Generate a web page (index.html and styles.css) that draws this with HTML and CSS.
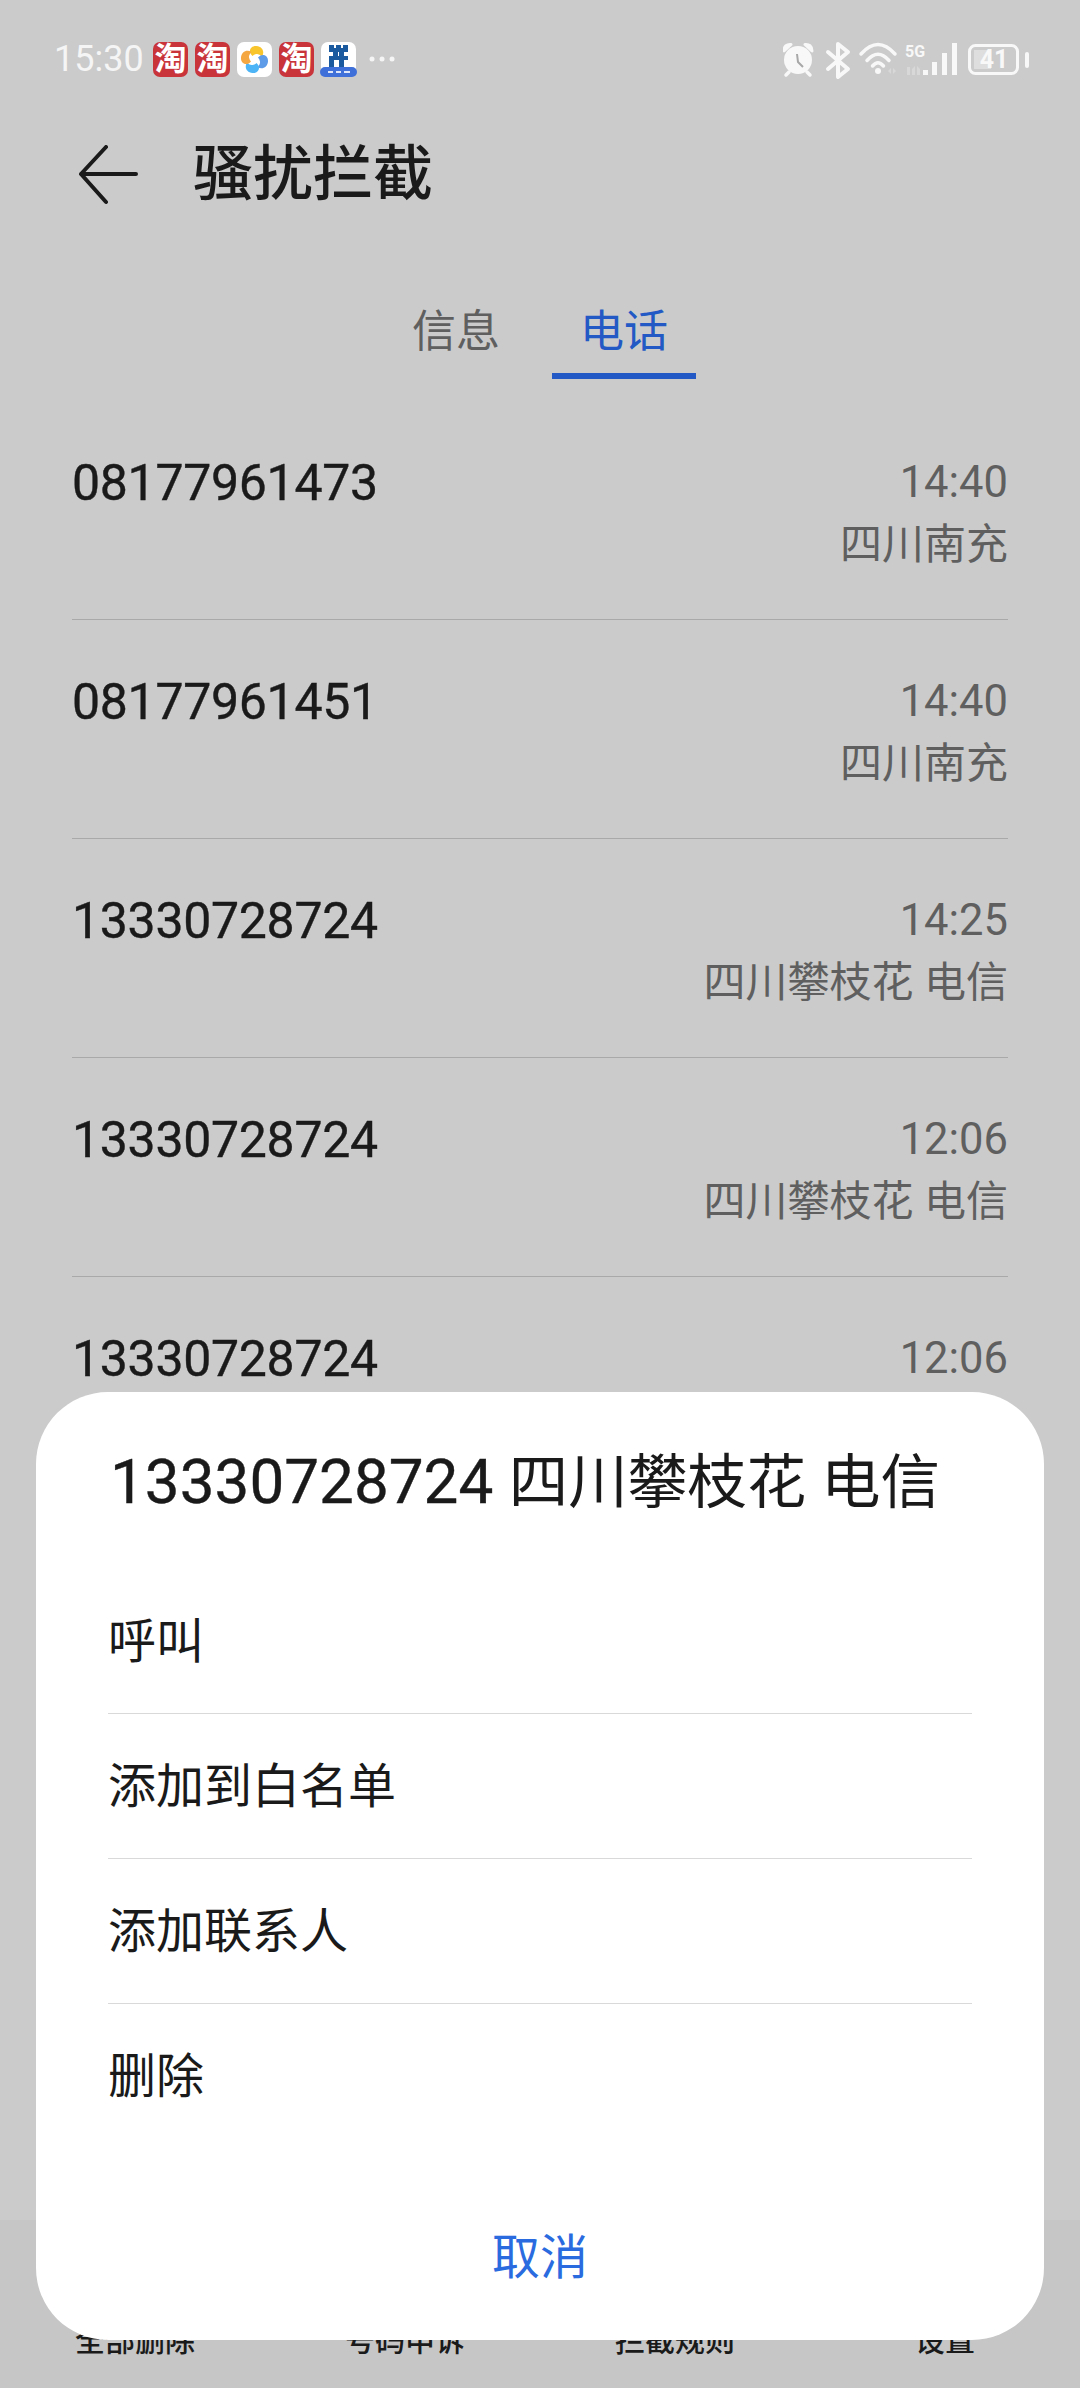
FILE: index.html
```html
<!DOCTYPE html>
<html lang="zh-CN">
<head>
    <meta charset="UTF-8">
    <meta name="viewport" content="width=device-width, initial-scale=1.0">
    <title>骚扰拦截</title>
    <link rel="stylesheet" href="styles.css">
</head>
<body>

<div class="page">
    <div class="status-bar">
        <span class="clock">15:30</span>
        <div class="notify-icons">
            <span class="tao-icon">淘</span>
            <span class="tao-icon">淘</span>
            <svg class="app-icon" viewBox="0 0 35 35">
                <rect width="35" height="35" rx="7" fill="#fff"/>
                <path d="M15.500 14C10.500 9.500 13.500 3.500 19.500 4C25.500 4.500 28 10 25 14.500Q22 11.500 19.500 12Q17 12.500 15.500 14Z" fill="#f9c52d"/>
                <path d="M21 15.500C25.500 10.500 31.500 13.500 31 19.500C30.500 25.500 25 28 20.500 25Q23.500 22 23 19.500Q22.500 17 21 15.500Z" fill="#5d9ae8"/>
                <path d="M19.500 21C24.500 25.500 21.500 31.500 15.500 31C9.500 30.500 7 25 10 20.500Q13 23.500 15.500 23Q18 22.500 19.500 21Z" fill="#4db5f5"/>
                <path d="M14 19.500C9.500 24.500 3.500 21.500 4 15.500C4.500 9.500 10 7 14.500 10Q11.500 13 12 15.500Q12.500 18 14 19.500Z" fill="#f5a742"/>
            </svg>
            <span class="tao-icon">淘</span>
            <svg class="app-icon" viewBox="0 0 35 35">
                <rect width="35" height="35" rx="7" fill="#fff"/>
                <path d="M8 3h5v3h2V3h5v3h2V3h5v7h-4v4h4v4h-4v7h-5v-7h-5v7h-5v-7H8v-4h4v-4H8zM17 10v4h1v-4z" fill="#1b5a9e" fill-rule="evenodd"/>
                <rect x="-1" y="25" width="37" height="10" rx="5" fill="#3f6fd8"/>
                <rect x="7" y="29" width="5" height="2" fill="#dfe8fb"/>
                <rect x="15" y="29" width="5" height="2" fill="#dfe8fb"/>
                <rect x="23" y="29" width="6" height="2" fill="#dfe8fb"/>
            </svg>
            <svg class="more-dots" viewBox="0 0 26 6">
                <circle cx="3" cy="3" r="2.500"/>
                <circle cx="13" cy="3" r="2.500"/>
                <circle cx="23" cy="3" r="2.500"/>
            </svg>
        </div>
        <div class="system-icons">
            <!-- alarm -->
            <svg class="sys-alarm" viewBox="0 0 40 50">
                <circle cx="15" cy="26" r="14" fill="#f8f8f8"/>
                <path d="M1 17C1 12 4 10 8 10.500ZM29 17C29 12 26 10 22 10.500Z" fill="#f8f8f8" stroke="#f8f8f8" stroke-width="3" stroke-linejoin="round"/>
                <path d="M6 38L3 41M24 38L27 41" stroke="#f8f8f8" stroke-width="3.500" stroke-linecap="round"/>
                <path d="M14 20L15 28L20 33" fill="none" stroke="#a8a8a8" stroke-width="2"/>
            </svg>
            <!-- bluetooth -->
            <svg class="sys-bt" viewBox="0 0 34 50">
                <path d="M5 18L25 35L15 43V10L25 18L5 35" fill="none" stroke="#f8f8f8" stroke-width="4" stroke-linejoin="round" stroke-linecap="round"/>
            </svg>
            <!-- wifi -->
            <svg class="sys-wifi" viewBox="0 0 45 50">
                <path d="M4 20Q21 1 38 20M10 26.500Q21 14 32 26.500M15.500 32Q21 25.500 26.500 32" fill="none" stroke="#f8f8f8" stroke-width="3.500" stroke-linecap="round"/>
                <circle cx="21" cy="37" r="3" fill="#f8f8f8"/>
                <path d="M31 37l3-3v6zM36 34l3 3l-3 3z" fill="#f2f2f2" opacity=".35"/>
            </svg>
            <!-- signal -->
            <svg class="sys-signal" viewBox="0 0 58 50">
                <text class="net-label" x="3" y="23">5G</text>
                <path d="M5 33h3v8H5zM10 35l3-3v9h-3zM15 32l3 3v6h-3z" fill="#f2f2f2" opacity=".35"/>
                <rect x="21" y="36" width="5" height="5" fill="#f8f8f8"/>
                <rect x="30" y="28" width="5" height="13" fill="#f8f8f8"/>
                <rect x="40" y="19" width="5" height="22" fill="#f8f8f8"/>
                <rect x="50" y="9" width="5" height="32" fill="#f8f8f8"/>
            </svg>
            <!-- battery -->
            <svg class="sys-battery" viewBox="0 0 69 50">
                <rect x="9.500" y="11.500" width="48" height="28" rx="6" fill="none" stroke="#f8f8f8" stroke-width="3"/>
                <rect x="14" y="16" width="17" height="19" fill="#dedede"/>
                <text class="battery-num" x="34" y="34">41</text>
                <rect x="65" y="18" width="4" height="16" rx="2" fill="#f8f8f8"/>
            </svg>
        </div>
    </div>

    <div class="header">
        <svg class="back-arrow" viewBox="0 0 60 60">
            <path d="M58 29H3M28 2L3 29L28 57" fill="none" stroke="#1a1a1a" stroke-width="4" stroke-linecap="round" stroke-linejoin="round"/>
        </svg>
        <h1 class="title">骚扰拦截</h1>
    </div>

    <div class="tabs">
        <div class="tab">信息</div>
        <div class="tab active">电话</div>
    </div>

    <div class="call-list">
        <div class="call-row">
            <div class="number">08177961473</div>
            <div class="meta">
                <div class="meta-time">14:40</div>
                <div>四川南充</div>
            </div>
        </div>
        <div class="call-row">
            <div class="number">08177961451</div>
            <div class="meta">
                <div class="meta-time">14:40</div>
                <div>四川南充</div>
            </div>
        </div>
        <div class="call-row">
            <div class="number">13330728724</div>
            <div class="meta">
                <div class="meta-time">14:25</div>
                <div>四川攀枝花 电信</div>
            </div>
        </div>
        <div class="call-row">
            <div class="number">13330728724</div>
            <div class="meta">
                <div class="meta-time">12:06</div>
                <div>四川攀枝花 电信</div>
            </div>
        </div>
        <div class="call-row">
            <div class="number">13330728724</div>
            <div class="meta">
                <div class="meta-time">12:06</div>
                <div>四川攀枝花 电信</div>
            </div>
        </div>
    </div>

    <div class="bottom-nav">
        <div class="nav-item">全部删除</div>
        <div class="nav-item">号码申诉</div>
        <div class="nav-item">拦截规则</div>
        <div class="nav-item">设置</div>
    </div>

    <div class="sheet">
        <div class="sheet-title">13330728724 <span class="sheet-place">四川攀枝花 电信</span></div>
        <div class="sheet-list">
            <div class="sheet-item">呼叫</div>
            <div class="sheet-item">添加到白名单</div>
            <div class="sheet-item">添加联系人</div>
            <div class="sheet-item">删除</div>
        </div>
        <div class="sheet-cancel">取消</div>
    </div>
</div>

</body>
</html>
```

FILE: styles.css
```css
* {
    box-sizing: border-box;
}
body {
    margin: 0;
    font-family: Roboto, 'Noto Sans CJK SC', sans-serif;
    background: #cbcbcb;
}
.page {
    position: relative;
    display: flex;
    flex-direction: column;
    width: 1080px;
    height: 2388px;
    overflow: hidden;
    background: #cbcbcb;
    color: #1a1a1a;
}

/* status bar */
.status-bar {
    display: flex;
    align-items: center;
    flex: none;
    height: 118px;
    padding: 0 51px 0 54px;
}
.clock {
    font-size: 36px;
    color: #f5f5f5;
    width: 99px;
}
.notify-icons {
    display: flex;
    align-items: center;
    gap: 7px;
}
.tao-icon {
    display: flex;
    align-items: center;
    justify-content: center;
    width: 35px;
    height: 35px;
    border-radius: 7px;
    background: #c8343a;
    color: #fff;
    font-size: 32px;
    font-weight: 700;
    line-height: 35px;
}
.app-icon {
    width: 35px;
    height: 35px;
    overflow: visible;
}
.more-dots {
    width: 26px;
    height: 6px;
    margin-left: 6px;
    fill: #f5f5f5;
}
.system-icons {
    display: flex;
    margin-left: auto;
}
.system-icons svg {
    height: 50px;
}
.sys-alarm { width: 40px; }
.sys-bt { width: 34px; }
.sys-wifi { width: 45px; }
.sys-signal { width: 58px; }
.sys-battery { width: 69px; }
.net-label {
    font-size: 16px;
    font-weight: 700;
    fill: #f8f8f8;
}
.battery-num {
    font-size: 25px;
    font-weight: 700;
    fill: #f8f8f8;
    text-anchor: middle;
}

/* header */
.header {
    display: flex;
    align-items: center;
    flex: none;
    height: 114px;
    padding-left: 78px;
    gap: 55px;
}
.back-arrow {
    width: 60px;
    height: 60px;
}
.title {
    margin: 0;
    font-size: 60px;
    font-weight: 500;
    line-height: 80px;
}

/* tabs */
.tabs {
    display: flex;
    justify-content: center;
    gap: 24px;
    flex: none;
    height: 169px;
    padding-top: 66px;
}
.tab {
    height: 81px;
    padding: 3px 28px 10px;
    font-size: 44px;
    line-height: 62px;
    color: #5f5f5f;
}
.tab.active {
    color: #2259c4;
    border-bottom: 6px solid #2259c4;
}

/* call list */
.call-list {
    flex: 1;
    min-height: 0;
    overflow: hidden;
    padding: 0 72px;
}
.call-row {
    display: flex;
    justify-content: space-between;
    height: 219px;
    padding-top: 51px;
    border-bottom: 1px solid #a9a9a9;
}
.number {
    font-size: 50px;
    letter-spacing: -0.3px;
    line-height: 62px;
    -webkit-text-stroke: 0.4px #1a1a1a;
}
.meta {
    font-size: 42px;
    line-height: 62px;
    color: #5f5f5f;
    text-align: right;
}
.meta-time {
    font-size: 43.500px;
}

/* bottom nav, mostly behind the sheet */
.bottom-nav {
    display: grid;
    grid-template-columns: repeat(4, 1fr);
    flex: none;
    height: 168px;
    padding-top: 100px;
    background: #c6c6c6;
}
.nav-item {
    font-size: 30px;
    font-weight: 500;
    line-height: 42px;
    text-align: center;
}

/* action sheet */
.sheet {
    position: absolute;
    top: 1392px;
    left: 36px;
    width: 1008px;
    height: 948px;
    padding: 54px 72px 0;
    border-radius: 72px;
    background: #fff;
}
.sheet-title {
    font-size: 62px;
    line-height: 72px;
    margin-bottom: 50px;
    padding-left: 2px;
    -webkit-text-stroke: 0.4px #1a1a1a;
}
.sheet-place {
    font-size: 59.500px;
    -webkit-text-stroke: 0;
}
.sheet-item {
    height: 145px;
    padding-top: 2px;
    font-size: 48px;
    line-height: 142px;
    border-bottom: 1px solid #d9d9d9;
}
.sheet-item:last-child {
    border-bottom: none;
}
.sheet-cancel {
    margin-top: 69px;
    font-size: 48px;
    line-height: 80px;
    text-align: center;
    color: #2a6be0;
}
```
